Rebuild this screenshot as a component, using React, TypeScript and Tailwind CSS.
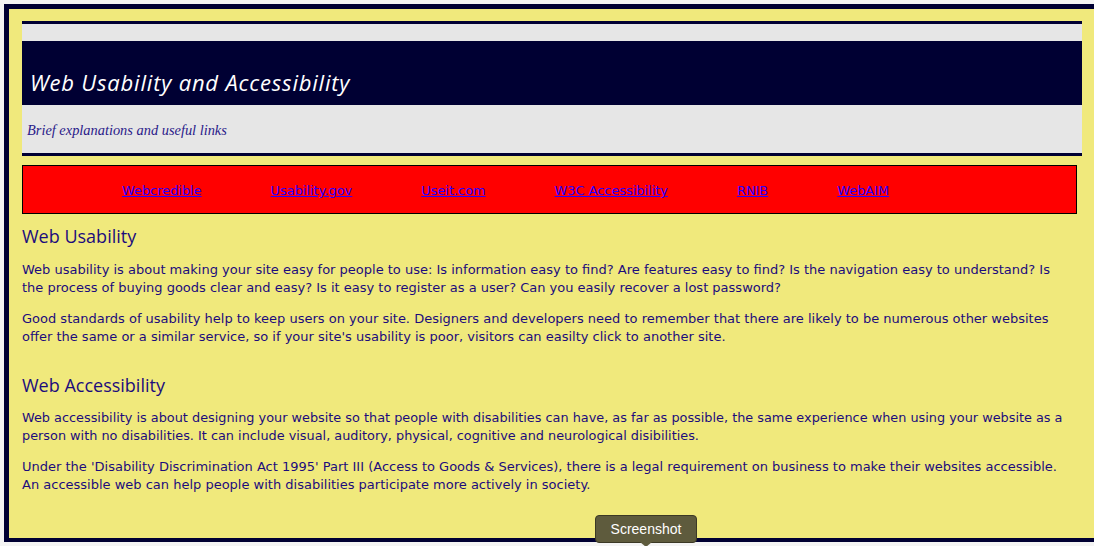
const links = [
  "Webcredible",
  "Usability.gov",
  "Useit.com",
  "W3C Accessibility",
  "RNIB",
  "WebAIM",
];

const body = "font-['DejaVu_Sans',Verdana,sans-serif] leading-[18px] text-[#1c0c7c]";
const heading = "font-['Open_Sans',sans-serif] text-[18px] leading-[24px] text-[#1c0c7c]";

export default function App() {
  return (
    <div className="relative h-[546px] w-[1094px] overflow-hidden bg-[#f4f4f4]">
      <div className="ml-[4px] mt-[4px] w-[1120px] border-b-[4px] border-l-[5px] border-t-[5px] border-[#000033] bg-[#f0e97c] pb-[44px] pl-[13px] pr-[30px] pt-[12px]">
        <div className="w-[1060px]">
          <div className="border-b-[3px] border-t-[3px] border-[#000033] bg-[#e6e6e6]">
            <div className="h-[17px]" />
            <div className="flex h-[64px] items-end bg-[#000033] pb-[9px] pl-[8px]">
              <h1 className="font-['Open_Sans',sans-serif] text-[22px] font-medium italic leading-[28px] tracking-[0.8px] text-white">
                Web Usability and Accessibility
              </h1>
            </div>
            <div className="flex h-[48px] items-center pl-[5px] pt-[4px]">
              <p className="font-['Liberation_Serif',serif] text-[14.4px] italic text-[#2a1a8a]">
                Brief explanations and useful links
              </p>
            </div>
          </div>

          <nav className="mt-[9px] mr-[5px] flex h-[49px] items-center gap-[69px] border border-black bg-[#ff0000] pl-[99px] pt-[3px]">
            {links.map((l) => (
              <a
                key={l}
                href="#"
                className="font-['DejaVu_Sans',Verdana,sans-serif] text-[12.9px] text-[#2b00ff] underline"
              >
                {l}
              </a>
            ))}
          </nav>

          <div className="pr-[7px]">
            <h2 className={`${heading} mt-[10px]`}>Web Usability</h2>
            <p className={`${body} mt-[13px] text-[13px]`}>
              Web usability is about making your site easy for people to use: Is information easy to find? Are
              features easy to find? Is the navigation easy to understand? Is the process of buying goods clear and
              easy? Is it easy to register as a user? Can you easily recover a lost password?
            </p>
            <p className={`${body} mt-[13px] text-[13px]`}>
              Good standards of usability help to keep users on your site. Designers and developers need to remember
              that there are likely to be numerous other websites offer the same or a similar service, so if your
              site's usability is poor, visitors can easilty click to another site.
            </p>

            <h2 className={`${heading} mt-[27px]`}>Web Accessibility</h2>
            <p className={`${body} mt-[12px] text-[12.85px]`}>
              Web accessibility is about designing your website so that people with disabilities can have, as far as
              possible, the same experience when using your website as a person with no disabilities. It can include
              visual, auditory, physical, cognitive and neurological disibilities.
            </p>
            <p className={`${body} mt-[13px] text-[13px]`}>
              Under the 'Disability Discrimination Act 1995' Part III (Access to Goods &amp; Services), there is a
              legal requirement on business to make their websites accessible. An accessible web can help people with
              disabilities participate more actively in society.
            </p>
          </div>
        </div>
      </div>

      <div className="absolute left-[595px] top-[515px] flex h-[28px] w-[102px] items-center justify-center rounded-[4px] border border-[#3b3925] bg-[#5e5b3d] font-['Liberation_Sans',sans-serif] text-[14px] text-white">
        Screenshot
        <span className="absolute left-[44px] top-[26px] h-0 w-0 border-l-[6px] border-r-[6px] border-t-[5px] border-l-transparent border-r-transparent border-t-[#5e5b3d]" />
      </div>
    </div>
  );
}
